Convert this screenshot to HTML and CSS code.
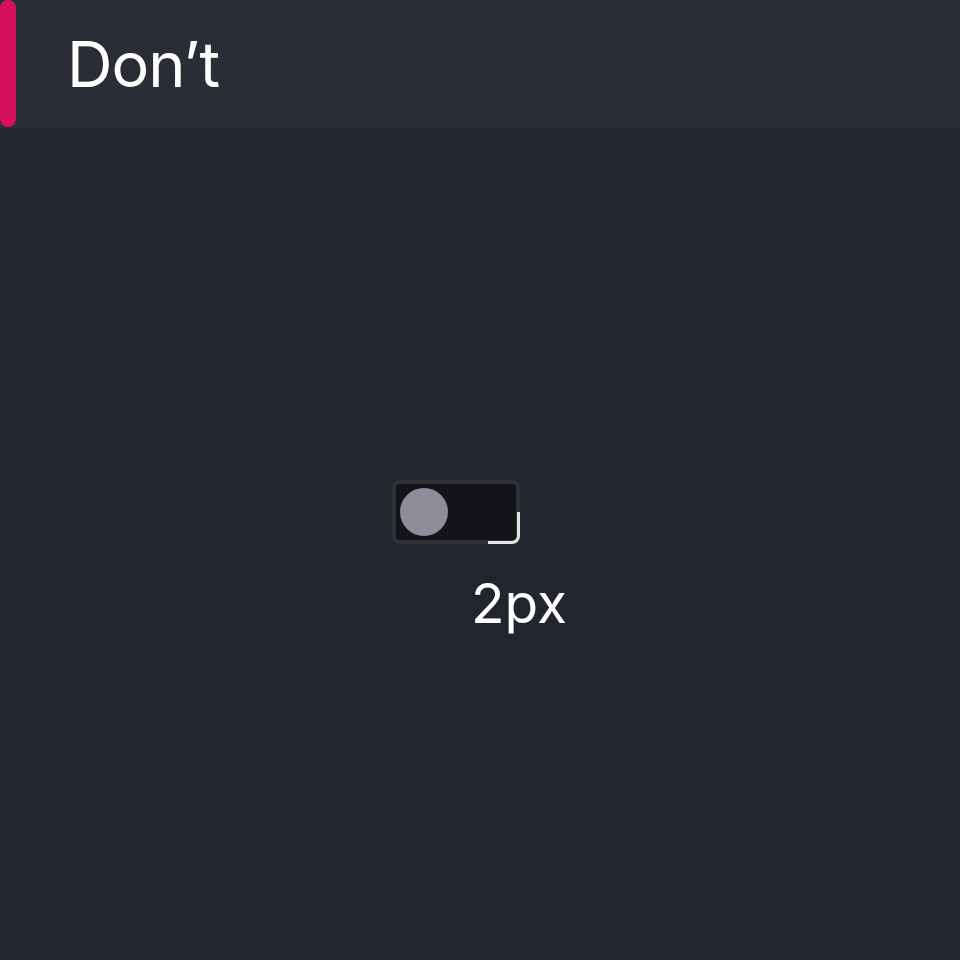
FILE: index.html
```html
<!DOCTYPE html>
<html>
<head>
<meta charset="utf-8">
<link rel="stylesheet" href="styles.css">
</head>
<body>
<header class="header">
  <span class="accent"></span>
  <h1 class="title">Don’t</h1>
</header>
<main class="stage">
  <div class="toggle">
    <span class="knob"></span>
    <span class="corner"></span>
  </div>
  <div class="label">2px</div>
</main>
</body>
</html>
```
FILE: styles.css
```css
html, body {
  margin: 0;
  padding: 0;
  background: #22252d;
  width: 960px;
  height: 960px;
  overflow: hidden;
  font-family: Inter, "Noto Sans", sans-serif;
}
.header {
  position: relative;
  height: 128px;
  background: #2a2d35;
  padding-left: 67px;
  box-sizing: border-box;
}
.accent {
  position: absolute;
  left: 0;
  top: 0;
  width: 16px;
  height: 127px;
  border-radius: 8px;
  background: #d6105f;
}
.title {
  margin: 0;
  font-size: 63px;
  font-weight: 400;
  letter-spacing: -1px;
  line-height: 128px;
  color: #ffffff;
}
.stage {
  padding-top: 352px;
  padding-left: 392px;
}
.toggle {
  position: relative;
  width: 128px;
  height: 64px;
  box-sizing: border-box;
  border: 4px solid #2e3036;
  border-radius: 8px;
  background: #131418;
  padding: 4px;
}
.knob {
  display: block;
  width: 48px;
  height: 48px;
  border-radius: 50%;
  background: #8e8e9a;
}
.corner {
  position: absolute;
  right: -4px;
  bottom: -4px;
  width: 32px;
  height: 32px;
  box-sizing: border-box;
  border-right: 3px solid #e2e2e2;
  border-bottom: 3px solid #e2e2e2;
  border-bottom-right-radius: 8px;
}
.label {
  margin-top: 26px;
  margin-left: 79px;
  font-size: 55px;
  line-height: 66px;
  color: #ffffff;
}
```
